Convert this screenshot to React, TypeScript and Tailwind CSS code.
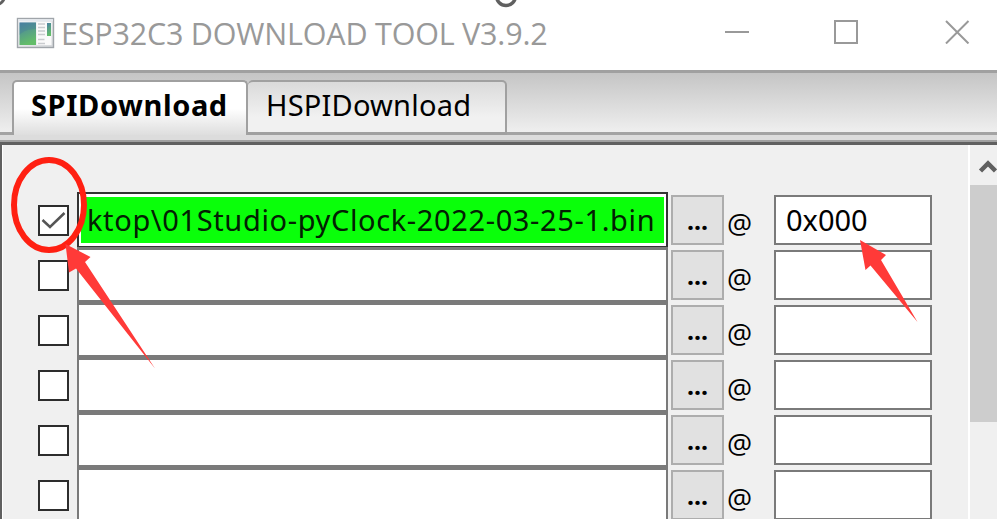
import React from "react";

const rows = [
  { checked: true, path: "ktop\\01Studio-pyClock-2022-03-25-1.bin", address: "0x000" },
  { checked: false, path: "", address: "" },
  { checked: false, path: "", address: "" },
  { checked: false, path: "", address: "" },
  { checked: false, path: "", address: "" },
  { checked: false, path: "", address: "" },
];

function AppIcon() {
  return (
    <svg className="ml-4 mt-[17px] shrink-0" width="39" height="32" viewBox="0 0 39 32">
      <defs>
        <linearGradient id="pane" x1="0" y1="0" x2="0.3" y2="1">
          <stop offset="0" stopColor="#4a80a4" />
          <stop offset="1" stopColor="#63bd69" />
        </linearGradient>
        <linearGradient id="shell" x1="0" y1="0" x2="1" y2="1">
          <stop offset="0" stopColor="#f8f9fa" />
          <stop offset="1" stopColor="#d4d7da" />
        </linearGradient>
      </defs>
      <rect x="1.5" y="1.5" width="36" height="29" fill="url(#shell)" stroke="#a0a5aa" strokeWidth="1.4" />
      <path d="M2 3.2h35" stroke="#e4e8ee" strokeWidth="2" />
      <rect x="3.5" y="5.5" width="16.5" height="22.5" fill="url(#pane)" />
      <path d="M3.5 18C7 14 13 12 20 12V5.500H3.500Z" fill="#457b9d" opacity=".35" />
      <rect x="20.500" y="5" width="15" height="23" fill="#fafafa" />
      <path d="M22 7h7M22 10.500h7M22 14h7M22 17.500h7M22 22.500h6.500M22 26.500h7" stroke="#c9cccf" strokeWidth="1.3" />
      <rect x="31" y="6" width="4" height="13" fill="url(#pane)" />
    </svg>
  );
}

function TitleBar() {
  return (
    <header className="flex h-[70px] bg-white text-[#999]">
      <AppIcon />
      <h1 className="ml-[6px] mt-[13px] w-[633px] whitespace-nowrap font-['Open_Sans',sans-serif] text-[30.5px] font-normal leading-[40px] tracking-[-0.2px]">
        ESP32C3 DOWNLOAD TOOL V3.9.2
      </h1>
      <svg className="ml-[31px] mt-5 shrink-0" width="250" height="24" viewBox="0 0 250 24" fill="none" stroke="#999" strokeWidth="2">
        <path d="M0 12H24" />
        <path d="M110 1H132V23H110Z" />
        <path d="M221 1L243.500 23.500M243.500 1L221 23.500" />
      </svg>
    </header>
  );
}

function Tabs() {
  return (
    <nav className="flex h-[65px] border-t-[3px] border-t-[#a0a0a0] bg-linear-to-b from-[#c5c5c5] to-[#f1f1f1] font-['Noto_Sans',sans-serif] text-[29px] leading-[40px] text-black">
      <div className="w-3 border-b-[3px] border-[#a3a3a3]" />
      <div className="mt-[7px] w-[236px] whitespace-nowrap rounded-t-[5px] border-x-2 border-t-2 border-[#a0a0a0] bg-linear-to-b from-white from-50% to-[#dedede] pl-[17px] pt-[3px] font-bold tracking-[0.6px]">
        SPIDownload
      </div>
      <div className="mt-[7px] w-[259px] whitespace-nowrap rounded-t-[5px] border-b-[3px] border-r-2 border-t-2 border-[#a0a0a0] bg-linear-to-b from-[#dadada] to-[#f1f1f1] to-70% pl-[18px] pt-[3px] tracking-[0.2px]">
        HSPIDownload
      </div>
      <div className="grow border-b-[3px] border-[#a3a3a3]" />
    </nav>
  );
}

function FileRow({ row }: { row: (typeof rows)[number] }) {
  return (
    <div className="flex h-[55px] shrink-0">
      <div className="mt-[13px] flex h-[31px] w-[31px] shrink-0 items-center justify-center border-2 border-[#2d2d2d] bg-white">
        {row.checked && (
          <svg width="25" height="19" viewBox="0 0 25 19" fill="none" stroke="#555" strokeWidth="2.500">
            <path d="M1.500 9L9 16L23.500 2" />
          </svg>
        )}
      </div>
      {row.checked ? (
        <div className="ml-[8px] h-[56px] w-[591px] shrink-0 border-2 border-[#333] bg-white px-[2px] py-[3px]">
          <div className="h-[46px] w-[583px] overflow-hidden whitespace-nowrap bg-[#0aff0a] pl-[6px] font-['Noto_Sans',sans-serif] text-[29px] leading-[46px] tracking-[0.63px] text-[#032003]">
            {row.path}
          </div>
        </div>
      ) : (
        <div className="ml-[8px] w-[591px] shrink-0 border-x-2 border-b-2 border-t-[3px] border-[#7a7a7a] bg-white" />
      )}
      <button className="ml-[3px] mt-[3px] h-[50px] w-[53px] shrink-0 border-2 border-[#adadad] bg-[#e1e1e1] font-['Noto_Sans',sans-serif] text-[25px] font-bold leading-[46px] text-black">
        ...
      </button>
      <span className="mt-[11px] w-[50px] shrink-0 pl-[3px] font-['Open_Sans',sans-serif] text-[28px] leading-[40px] text-black">
        @
      </span>
      <div className="mt-[3px] h-[50px] w-[158px] shrink-0 border-2 border-[#7a7a7a] bg-white pl-[10px] font-['Noto_Sans',sans-serif] text-[29px] leading-[45px] text-black">
        {row.address}
      </div>
    </div>
  );
}

function ScrollBar() {
  return (
    <div className="flex h-full w-[29px] shrink-0 flex-col border-l-2 border-white bg-[#f0f0f0]">
      <svg className="ml-[8px] h-[40px] w-[19px] shrink-0" viewBox="0 0 19 40" fill="none" stroke="#606060" strokeWidth="4.500">
        <path d="M2.500 26L10 18.500L17.500 26" />
      </svg>
      <div className="h-[237px] bg-[#cdcdcd]" />
    </div>
  );
}

function Annotations() {
  return (
    <svg className="pointer-events-none absolute inset-0" width="997" height="519" viewBox="0 0 997 519" fill="none">
      <circle cx="-4" cy="-4" r="8.500" stroke="#606060" strokeWidth="3" />
      <circle cx="506" cy="-4" r="9.500" stroke="#606060" strokeWidth="3.500" />
      <ellipse cx="49" cy="205" rx="35" ry="45" stroke="#ff2012" strokeWidth="6" />
      <path d="M65.500 244L90.500 257L85 262L155 368.500L76 268.500L69 272.500Z" fill="#ff3a38" />
      <path d="M860 240L886 255L881 260L917.500 322L870.500 265.500L865.500 270Z" fill="#ff3a38" />
    </svg>
  );
}

export default function App() {
  return (
    <main className="relative flex h-[519px] w-[997px] flex-col overflow-hidden bg-[#f0f0f0]">
      <TitleBar />
      <Tabs />
      <div className="h-[5px] shrink-0 bg-[#dcdcdc]" />
      <div className="h-[2px] shrink-0 bg-[#a0a0a0]" />
      <div className="h-[3px] shrink-0 bg-[#606060]" />
      <section className="flex h-[374px] shrink-0 border-l-2 border-[#606060]">
        <div className="flex w-[966px] shrink-0 flex-col overflow-hidden border-l border-white pl-[35px] pt-[47px]">
          {rows.map((row, index) => (
            <FileRow key={index} row={row} />
          ))}
        </div>
        <ScrollBar />
      </section>
      <Annotations />
    </main>
  );
}
